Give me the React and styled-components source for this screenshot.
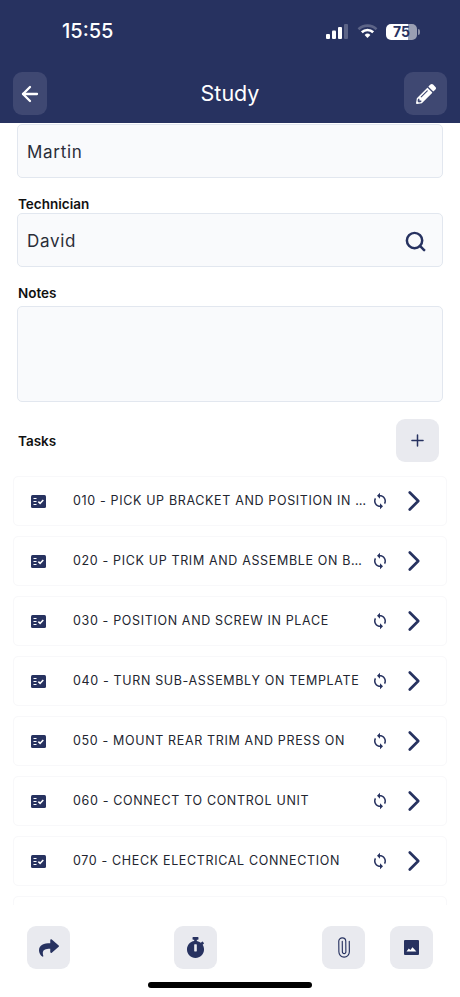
import React from "react";
import styled, { createGlobalStyle } from "styled-components";
import { ArrowLeft, Plus, ChevronRight, Search, Paperclip } from "lucide-react";
import { FaPencilAlt, FaShare, FaStopwatch } from "react-icons/fa";
import { MdSync } from "react-icons/md";

const NAVY = "#273260";

const Global = createGlobalStyle`
  html, body { margin: 0; padding: 0; background: #fff; }
  body { font-family: Inter, "Liberation Sans", sans-serif; }
  * { box-sizing: border-box; }
`;

const Page = styled.div`
  width: 460px;
  height: 997px;
  display: flex;
  flex-direction: column;
  overflow: hidden;
  background: #fff;
`;

const Header = styled.header`
  height: 123px;
  flex: none;
  background: ${NAVY};
  color: #fff;
  display: flex;
  flex-direction: column;
`;

const StatusBar = styled.div`
  height: 72px;
  padding: 20px 41px 0 62px;
  display: flex;
  justify-content: space-between;
  align-items: flex-start;
`;

const Time = styled.span`
  font-size: 20px;
  font-weight: 500;
  line-height: 23px;
`;

const StatusIcons = styled.div`
  display: flex;
  align-items: center;
  gap: 8px;
  height: 23px;
`;

const Battery = styled.div`
  width: 31px;
  height: 16px;
  border-radius: 5px;
  background: linear-gradient(90deg, #fff 0 72%, #9a9fb3 72% 100%);
  color: ${NAVY};
  font-size: 14px;
  font-weight: 700;
  line-height: 16px;
  text-align: center;
  margin-right: 2px;
  position: relative;
  &::after {
    content: "";
    position: absolute;
    right: -3px;
    top: 5px;
    width: 2px;
    height: 6px;
    border-radius: 0 2px 2px 0;
    background: #8b90a8;
  }
`;

const NavBar = styled.div`
  padding: 0 13px;
  display: grid;
  grid-template-columns: 1fr auto 1fr;
  align-items: start;
`;

const NavButton = styled.button`
  width: ${(p) => p.$w}px;
  height: 43px;
  border: 0;
  padding: 0;
  border-radius: 9px;
  background: #3f4872;
  color: #fff;
  display: flex;
  align-items: center;
  justify-content: center;
  justify-self: ${(p) => p.$side};
`;

const Title = styled.h1`
  margin: 0;
  font-size: 21.5px;
  font-weight: 400;
  line-height: 43px;
`;

const Body = styled.main`
  flex: 1;
  min-height: 0;
  overflow: hidden;
  display: flex;
  flex-direction: column;
  padding: 1px 13px 0;
`;

const Field = styled.div`
  margin: 0 4px;
  display: flex;
  flex-direction: column;
`;

const Label = styled.label`
  font-size: 13.5px;
  font-weight: 600;
  line-height: 17px;
  color: #111;
  padding-left: 1px;
  margin: ${(p) => p.$top}px 0 ${(p) => p.$bottom}px;
`;

const Input = styled.div`
  height: ${(p) => p.$h || 54}px;
  border: 1px solid #e2e7ef;
  border-radius: 5px;
  background: #f9fafc;
  padding: 2px 15px 0 9px;
  display: flex;
  align-items: center;
  justify-content: space-between;
  font-size: 17px;
  letter-spacing: 0.7px;
  color: #2a2d38;
`;

const TasksHead = styled.div`
  margin: 17px 8px 14px 5px;
  display: flex;
  align-items: center;
  justify-content: space-between;
`;

const TasksLabel = styled.span`
  font-size: 13.5px;
  font-weight: 600;
  color: #111;
`;

const SoftButton = styled.button`
  width: 43px;
  height: 43px;
  border: 0;
  padding: 0;
  border-radius: 9px;
  background: #e9eaef;
  color: ${NAVY};
  display: flex;
  align-items: center;
  justify-content: center;
`;

const TaskList = styled.div`
  display: flex;
  flex-direction: column;
  gap: 10px;
  flex: none;
`;

const TaskRow = styled.div`
  height: 50px;
  flex: none;
  border: 1px solid #f8f8fa;
  border-radius: 5px;
  padding: 0 15px 0 17px;
  display: flex;
  align-items: center;
  color: ${NAVY};
`;

const TaskText = styled.span`
  flex: 1;
  min-width: 0;
  margin: -1px 0 1px 27px;
  font-size: 12.5px;
  letter-spacing: 0.65px;
  color: #22252f;
  white-space: nowrap;
  overflow: hidden;
  text-overflow: ellipsis;
`;

const SyncWrap = styled.span`
  width: 20px;
  margin: 0 7px 0 2px;
  flex: none;
  display: flex;
  justify-content: center;
`;

const Footer = styled.footer`
  height: 92px;
  flex: none;
  background: #fff;
  display: flex;
  flex-direction: column;
  align-items: center;
  padding-top: 21px;
  margin-top: -1px;
`;

const FooterBar = styled.div`
  width: 100%;
  padding: 0 27px;
  display: flex;
  align-items: center;
`;

const SpacerGroup = styled.div`
  display: flex;
  gap: 25px;
  margin-left: auto;
`;

const Middle = styled.div`
  margin-left: 104px;
`;

const HomeBar = styled.div`
  width: 164px;
  height: 6px;
  border-radius: 3px;
  background: #000;
  margin-top: 13px;
`;

const Clip = styled(Paperclip)`
  transform: rotate(-45deg);
`;

const TaskIcon = () => (
  <svg width="15" height="13" viewBox="0 0 15 13" fill="none">
    <rect width="15" height="13" rx="1.5" fill={NAVY} />
    <path d="M2.5 3.5h3M2.5 6.5h3M2.5 9.5h3" stroke="#fff" strokeWidth="1.2" />
    <path d="M7.4 6.6l1.7 1.7 3.2-3.4" stroke="#fff" strokeWidth="1.5" />
  </svg>
);

const ImageIcon = () => (
  <svg width="15" height="15" viewBox="0 0 15 15">
    <rect width="15" height="15" rx="1" fill={NAVY} />
    <path d="M2.5 11.5l2.3-3 1.6 1.6 2.1-2.8 3.9 4.2z" fill="#fff" />
  </svg>
);

const Signal = () => (
  <svg width="23" height="15" viewBox="0 0 23 15">
    <rect x="0" y="10" width="4" height="5" rx="1" fill="#fff" />
    <rect x="6" y="6.5" width="4" height="8.5" rx="1" fill="#fff" />
    <rect x="12" y="3" width="4" height="12" rx="1" fill="#fff" />
    <rect x="18" y="0" width="4" height="15" rx="1" fill="#5c6487" />
  </svg>
);

const Wifi = () => (
  <svg width="21" height="15" viewBox="0 0 21 15" fill="none">
    <path d="M1.5 5.2a13 13 0 0 1 18 0" stroke="#5c6487" strokeWidth="2.6" />
    <path d="M4.8 8.2a8.3 8.3 0 0 1 11.4 0" stroke="#fff" strokeWidth="2.6" />
    <path d="M7.6 11a4.2 4.2 0 0 1 5.8 0L10.5 14z" fill="#fff" />
  </svg>
);

const tasks = [
  "010 - PICK UP BRACKET AND POSITION IN THE TEMPLATE",
  "020 - PICK UP TRIM AND ASSEMBLE ON BRACKET",
  "030 - POSITION AND SCREW IN PLACE",
  "040 - TURN SUB-ASSEMBLY ON TEMPLATE",
  "050 - MOUNT REAR TRIM AND PRESS ON",
  "060 - CONNECT TO CONTROL UNIT",
  "070 - CHECK ELECTRICAL CONNECTION",
  "",
];

export default function App() {
  return (
    <Page>
      <Global />
      <Header>
        <StatusBar>
          <Time>15:55</Time>
          <StatusIcons>
            <Signal />
            <Wifi />
            <Battery>75</Battery>
          </StatusIcons>
        </StatusBar>
        <NavBar>
          <NavButton $w={34} $side="start">
            <ArrowLeft size={24} strokeWidth={2.3} />
          </NavButton>
          <Title>Study</Title>
          <NavButton $w={43} $side="end">
            <FaPencilAlt size={20} />
          </NavButton>
        </NavBar>
      </Header>
      <Body>
        <Field>
          <Input>Martin</Input>
          <Label $top={18} $bottom={0}>Technician</Label>
          <Input>
            David
            <Search size={23} strokeWidth={2.6} color={NAVY} />
          </Input>
          <Label $top={18} $bottom={4}>Notes</Label>
          <Input $h={96} />
        </Field>
        <TasksHead>
          <TasksLabel>Tasks</TasksLabel>
          <SoftButton>
            <Plus size={19} strokeWidth={1.9} />
          </SoftButton>
        </TasksHead>
        <TaskList>
          {tasks.map((t, i) => (
            <TaskRow key={i}>
              {t && <TaskIcon />}
              {t && <TaskText>{t}</TaskText>}
              {t && (
                <>
                  <SyncWrap>
                    <MdSync size={18} />
                  </SyncWrap>
                  <ChevronRight size={34} strokeWidth={1.9} />
                </>
              )}
            </TaskRow>
          ))}
        </TaskList>
      </Body>
      <Footer>
        <FooterBar>
          <SoftButton>
            <FaShare size={20} />
          </SoftButton>
          <Middle>
            <SoftButton>
              <FaStopwatch size={21} />
            </SoftButton>
          </Middle>
          <SpacerGroup>
            <SoftButton>
              <Clip size={21} strokeWidth={1.3} />
            </SoftButton>
            <SoftButton>
              <ImageIcon />
            </SoftButton>
          </SpacerGroup>
        </FooterBar>
        <HomeBar />
      </Footer>
    </Page>
  );
}
